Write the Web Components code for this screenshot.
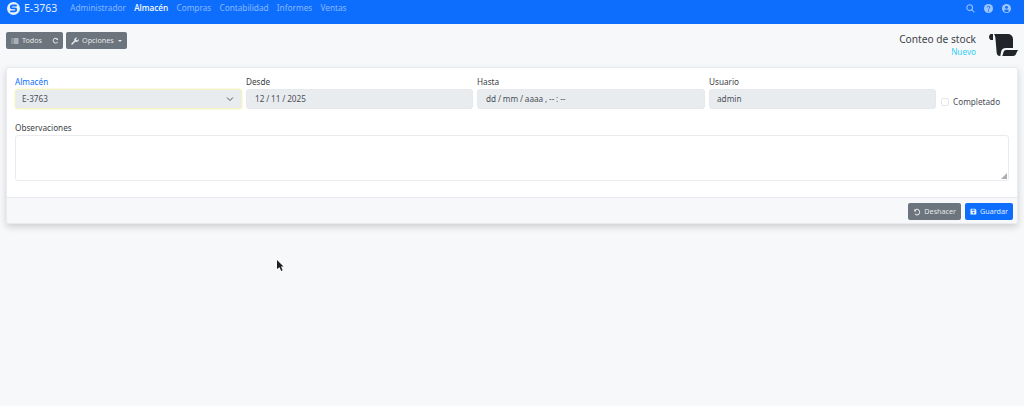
<!DOCTYPE html>
<html lang="es">
<head>
<meta charset="utf-8">
<title>Conteo de stock</title>
<style>
html, body { margin: 0; height: 100%; }
body {
  background: #f7f8fa;
  color: #212529;
  font: 8.200px/1.5 "Noto Sans", "Open Sans", sans-serif;
}
</style>
</head>
<body>
<app-navbar brand="E-3763">
  <nav-link>Administrador</nav-link>
  <nav-link active>Almacén</nav-link>
  <nav-link>Compras</nav-link>
  <nav-link>Contabilidad</nav-link>
  <nav-link>Informes</nav-link>
  <nav-link>Ventas</nav-link>
</app-navbar>
<app-toolbar title="Conteo de stock" state="Nuevo"></app-toolbar>
<stock-form></stock-form>
<mouse-pointer></mouse-pointer>

<script>
const ICONS = {
  list: '<path d="M1 3h2v2H1zM1 7h2v2H1zM1 11h2v2H1zM5 3.2h10v1.6H5zM5 7.200h10v1.600H5zM5 11.200h10v1.600H5z"/>',
  refresh: '<path d="M13.600 2.400v4.400H9.200l1.700-1.700A4.300 4.300 0 1 0 12 10.200l1.500 1.200A6.200 6.200 0 1 1 12.200 3.800z"/>',
  wrench: '<path d="M15.400 4.200l-2.600 2.600-2.300-.6-.6-2.300L12.500 1.300a4.500 4.500 0 0 0-5.700 5.800L1 12.900a1.500 1.500 0 0 0 0 2.100 1.500 1.500 0 0 0 2.100 0l5.800-5.800a4.500 4.500 0 0 0 6.500-5z"/>',
  undo: '<path d="M2.400 2v4.800h4.800L5.300 4.900a4.300 4.300 0 1 1-.4 6.300l-1.400 1.400A6.200 6.200 0 1 0 3.900 3.500z"/>',
  save: '<path fill-rule="evenodd" d="M2.500 1.500h9l3 3v9a1.500 1.500 0 0 1-1.500 1.500H2.500A1.500 1.500 0 0 1 1 13.500v-10.500a1.500 1.500 0 0 1 1.500-1.500zM4 3.500v3h6.500v-3zM8 8.500a2 2 0 1 0 0 4 2 2 0 0 0 0-4z"/>',
};

function icon(name, size) {
  return `<svg width="${size}" height="${size}" viewBox="0 0 16 16" fill="currentColor" aria-hidden="true">${ICONS[name]}</svg>`;
}

class NavLink extends HTMLElement {
  constructor() {
    super();
    this.attachShadow({ mode: 'open' }).innerHTML = `
<style>
:host { display: block; color: rgb(255 255 255 / 50%); font-size: 8.250px; }
:host([active]) { color: #fff; font-weight: 500; }
</style>
<slot></slot>`;
  }
}
customElements.define('nav-link', NavLink);

class AppNavbar extends HTMLElement {
  constructor() {
    super();
    this.attachShadow({ mode: 'open' }).innerHTML = `
<style>
:host {
  display: flex;
  align-items: center;
  height: 24px;
  box-sizing: border-box;
  padding: 0 13px 7px 7px;
  background: #0d6efd;
  color: #fff;
}
.logo { margin-right: 4px; }
.brand { font-size: 10.500px; margin-right: 13px; color: rgb(255 255 255 / 90%); }
.links { display: flex; gap: 8.200px; }
.tools { display: flex; gap: 9px; margin-left: auto; color: rgb(255 255 255 / 60%); }
svg { display: block; }
</style>
<svg class="logo" width="13" height="13" viewBox="0 0 13 13">
  <circle cx="6.500" cy="6.500" r="6.500" fill="#fff" fill-opacity=".9"/>
  <path d="M9.800 3.500H5.200a1.400 1.400 0 0 0 0 2.900h2.600a1.400 1.400 0 0 1 0 2.900H3.200" fill="none" stroke="#0d6efd" stroke-width="1.800"/>
</svg>
<span class="brand">${this.getAttribute('brand')}</span>
<div class="links"><slot></slot></div>
<div class="tools">
  <svg width="9" height="9" viewBox="0 0 16 16" fill="none" stroke="currentColor" stroke-width="1.800"><circle cx="6.500" cy="6.500" r="5"/><path d="M10.200 10.200L15 15"/></svg>
  <svg width="9" height="9" viewBox="0 0 16 16"><circle cx="8" cy="8" r="8" fill="currentColor"/><path d="M5.600 6.200a2.400 2.400 0 1 1 3.400 2.100c-.7.400-1 .7-1 1.500" fill="none" stroke="#0d6efd" stroke-width="1.700"/><circle cx="8" cy="12.300" r="1.100" fill="#0d6efd"/></svg>
  <svg width="9" height="9" viewBox="0 0 16 16"><circle cx="8" cy="8" r="8" fill="currentColor"/><circle cx="8" cy="6" r="2.600" fill="#0d6efd"/><path d="M3.400 12.600c.8-2 2.500-2.900 4.600-2.900s3.800.9 4.600 2.900A6.300 6.300 0 0 1 8 14.500a6.300 6.300 0 0 1-4.600-1.900z" fill="#0d6efd"/></svg>
</div>`;
  }
}
customElements.define('app-navbar', AppNavbar);

class AppButton extends HTMLElement {
  constructor() {
    super();
    this.attachShadow({ mode: 'open' }).innerHTML = `
<style>
:host {
  display: inline-flex;
  align-items: center;
  gap: 3px;
  height: 17px;
  padding: 0 5px;
  box-sizing: border-box;
  background: #6c757d;
  border-radius: 2px;
  color: rgb(255 255 255 / 85%);
  font-size: 7.200px;
  white-space: nowrap;
}
:host([primary]) { background: #0d6efd; color: rgb(255 255 255 / 90%); }
</style>
<slot></slot>`;
  }
}
customElements.define('app-button', AppButton);

class AppToolbar extends HTMLElement {
  constructor() {
    super();
    this.attachShadow({ mode: 'open' }).innerHTML = `
<style>
:host {
  display: flex;
  justify-content: space-between;
  height: 43px;
  box-sizing: border-box;
  padding: 8px 5px 0 6px;
}
.left { display: flex; gap: 3px; align-items: flex-start; }
.right { display: flex; gap: 13px; }
.title { font-size: 10.200px; line-height: 14px; color: #3d4247; text-align: right; }
.state { font-size: 8.200px; line-height: 12px; color: #2fd0f5; text-align: right; }
.spacer { width: 4px; }
.refresh { margin-right: -1px; }
.caret { width: 0; height: 0; margin-left: 1px; border: 2.500px solid transparent; border-top-color: currentColor; border-bottom: 0; }
svg { display: block; }
.scroll { margin-top: 1px; }
</style>
<div class="left">
  <app-button>${icon('list', 8)}<span>Todos</span><span class="spacer"></span><span class="refresh">${icon('refresh', 7)}</span></app-button>
  <app-button>${icon('wrench', 8)}<span>Opciones</span><span class="caret"></span></app-button>
</div>
<div class="right">
  <div>
    <div class="title">${this.getAttribute('title')}</div>
    <div class="state">${this.getAttribute('state')}</div>
  </div>
  <svg class="scroll" width="30" height="24" viewBox="0 0 30 24" fill="#212529">
    <path d="M1.500 1H4v6H1.500C.5 6 0 5 0 4s.5-2.200 1.500-3z"/>
    <path d="M5 1H19a5 5 0 0 1 5 5V15H17c-3 0-4.500 1.500-5 4l-.7 4H11c-2 0-3-1-3.300-3L6.500 6C6.300 4 6 2 5 1z"/>
    <path d="M17 17H29.500c-1.500 1-2 2.500-2.500 4-.4 1.200-1.500 2-3 2H13.200c.7-1 .8-2.200 1-3 .3-1.500 1.300-3 2.800-3z"/>
  </svg>
</div>`;
  }
}
customElements.define('app-toolbar', AppToolbar);

class FormField extends HTMLElement {
  constructor() {
    super();
    this.attachShadow({ mode: 'open' }).innerHTML = `
<style>
:host { display: block; min-width: 0; }
.label { display: block; font-size: 8.200px; line-height: 12px; color: #3c4246; margin-bottom: 1px; }
:host([focused]) .label { color: #0d6efd; }
.box {
  display: flex;
  align-items: center;
  justify-content: space-between;
  height: 20px;
  box-sizing: border-box;
  padding: 0 7px;
  background: #e9ecef;
  border: 1px solid #e6e8ec;
  border-radius: 3px;
  font-size: 8.200px;
  color: #495057;
}
:host([focused]) .box { border-color: #f5f3c4; box-shadow: 0 0 0 .5px #f7f5d0; padding-left: 6px; }
:host([date]) .box { padding-left: 8px; word-spacing: -.3px; }
svg { display: block; }
</style>
<span class="label">${this.getAttribute('label')}</span>
<div class="box"><span>${this.getAttribute('value')}</span><slot></slot></div>`;
  }
}
customElements.define('form-field', FormField);

class StockForm extends HTMLElement {
  constructor() {
    super();
    this.attachShadow({ mode: 'open' }).innerHTML = `
<style>
:host {
  display: block;
  margin: 0 6px;
  background: #fff;
  border: 1px solid #e9ebee;
  border-radius: 3px;
  box-shadow: 0 3px 7px rgb(0 0 0 / 16%);
  overflow: hidden;
}
.body { padding: 8px 8px 16px 8px; }
.row {
  display: grid;
  grid-template-columns: 227px 227px 228px 227px 1fr;
  column-gap: 4px;
  margin-bottom: 13px;
}
.check {
  display: flex;
  align-items: center;
  gap: 4px;
  padding: 19px 0 0 1px;
  font-size: 8.200px;
  color: #495057;
  white-space: nowrap;
}
.tick { width: 8px; height: 8px; box-sizing: border-box; border: 1px solid #e4e6ea; border-radius: 2px; background: #fff; }
.obs { display: block; font-size: 8.200px; line-height: 12px; color: #3c4246; margin-bottom: 1px; }
.area {
  position: relative;
  height: 46px;
  box-sizing: border-box;
  border: 1px solid #e9ebee;
  border-radius: 3px;
}
.grip { position: absolute; right: 1px; bottom: 1px; }
.foot {
  display: flex;
  justify-content: flex-end;
  gap: 4px;
  padding: 5px 4px;
  height: 26px;
  box-sizing: border-box;
  background: #f7f8fa;
  border-top: 1px solid #e6e8ec;
}
svg { display: block; }
</style>
<div class="body">
  <div class="row">
    <form-field focused label="Almacén" value="E-3763">
      <svg width="8" height="8" viewBox="0 0 16 16" fill="none" stroke="#4d5359" stroke-width="2"><path d="M2 5l6 6 6-6"/></svg>
    </form-field>
    <form-field date label="Desde" value="12 / 11 / 2025"></form-field>
    <form-field date label="Hasta" value="dd / mm / aaaa ,  -- : --"></form-field>
    <form-field label="Usuario" value="admin"></form-field>
    <label class="check"><span class="tick"></span>Completado</label>
  </div>
  <span class="obs">Observaciones</span>
  <div class="area">
    <svg class="grip" width="6" height="6" viewBox="0 0 6 6"><path d="M6 0v6H0z" fill="#a9adb1"/></svg>
  </div>
</div>
<div class="foot">
  <app-button>${icon('undo', 8)}<span>Deshacer</span></app-button>
  <app-button primary>${icon('save', 7)}<span>Guardar</span></app-button>
</div>`;
  }
}
customElements.define('stock-form', StockForm);

class MousePointer extends HTMLElement {
  constructor() {
    super();
    this.attachShadow({ mode: 'open' }).innerHTML = `
<style>
:host { position: absolute; left: 277px; top: 260px; }
svg { display: block; }
</style>
<svg width="7" height="12" viewBox="0 0 7 12"><path d="M0 0l6.500 6.500H4l1.600 3.800-1.400.7-1.600-3.800L0 9z" fill="#1d1f22"/></svg>`;
  }
}
customElements.define('mouse-pointer', MousePointer);
</script>
</body>
</html>
